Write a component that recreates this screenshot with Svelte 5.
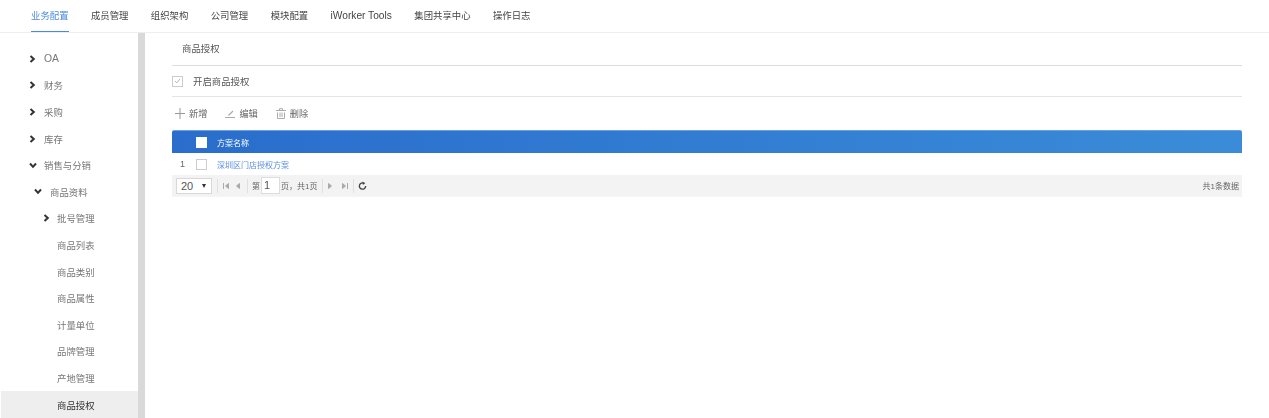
<script>
  const tabs = ['业务配置', '成员管理', '组织架构', '公司管理', '模块配置', 'iWorker Tools', '集团共享中心', '操作日志'];

  const menu = [
    { label: 'OA', depth: 0, arrow: 'right' },
    { label: '财务', depth: 0, arrow: 'right' },
    { label: '采购', depth: 0, arrow: 'right' },
    { label: '库存', depth: 0, arrow: 'right' },
    { label: '销售与分销', depth: 0, arrow: 'down' },
    { label: '商品资料', depth: 1, arrow: 'down' },
    { label: '批号管理', depth: 2, arrow: 'right' },
    { label: '商品列表', depth: 2 },
    { label: '商品类别', depth: 2 },
    { label: '商品属性', depth: 2 },
    { label: '计量单位', depth: 2 },
    { label: '品牌管理', depth: 2 },
    { label: '产地管理', depth: 2 },
    { label: '商品授权', depth: 2, active: true }
  ];
</script>

<div class="page">
  <nav class="topnav">
    {#each tabs as tab, i}
      <span class="tab" class:current={i === 0}>{tab}</span>
    {/each}
  </nav>

  <div class="body">
    <aside class="sidebar">
      <ul class="menu">
        {#each menu as item}
          <li class="item depth{item.depth}" class:active={item.active}>
            <span class="arrow">
              {#if item.arrow === 'right'}
                <svg width="7" height="8" viewBox="0 0 7 8"><path d="M1.5 1 L4.8 4 L1.5 7" fill="none" stroke="#333" stroke-width="2"/></svg>
              {:else if item.arrow === 'down'}
                <svg width="8" height="7" viewBox="0 0 8 7"><path d="M1 1.5 L4 4.8 L7 1.5" fill="none" stroke="#333" stroke-width="2"/></svg>
              {/if}
            </span>
            <span class="label">{item.label}</span>
          </li>
        {/each}
      </ul>
    </aside>
    <div class="scrollbar"></div>

    <main class="content">
      <div class="crumb">商品授权</div>

      <div class="enable">
        <span class="check small">
          <svg width="7" height="6" viewBox="0 0 7 6"><path d="M1 3 L2.8 4.8 L6 1" fill="none" stroke="#aaa" stroke-width="0.9"/></svg>
        </span>
        <span>开启商品授权</span>
      </div>

      <div class="toolbar">
        <span class="tool">
          <svg width="10" height="11" viewBox="0 0 10 11"><path d="M5 0 V11 M0 5.5 H10" stroke="#999" stroke-width="1"/></svg>
          新增
        </span>
        <span class="tool">
          <svg width="10" height="11" viewBox="0 0 10 11"><path d="M0 9.5 H10 M3.5 7.5 L8 3" fill="none" stroke="#aaa" stroke-width="1.2"/></svg>
          编辑
        </span>
        <span class="tool">
          <svg width="10" height="11" viewBox="0 0 10 11"><path d="M0 2.5 H10 M3.5 2.5 V0.7 H6.5 V2.5 M1.5 4.5 V10.5 H8.5 V4.5 M4 4.5 V9 M6 4.5 V9" fill="none" stroke="#aaa" stroke-width="1"/></svg>
          删除
        </span>
      </div>

      <div class="grid">
        <div class="grid-head">
          <span class="head-check"></span>
          <span class="head-title">方案名称</span>
        </div>
        <div class="grid-row">
          <span class="row-no">1</span>
          <span class="check row-check"></span>
          <span class="row-link">深圳区门店授权方案</span>
        </div>
        <div class="pager">
          <span class="page-size">20<i class="caret"></i></span>
          <span class="sep"></span>
          <span class="pg-group prev">
            <svg width="6" height="8" viewBox="0 0 6 8"><path d="M0.5 1 V7 M5.5 1.5 L2.5 4 L5.5 6.5 Z" fill="#aaa" stroke="#aaa" stroke-width="1"/></svg>
            <svg width="4" height="8" viewBox="0 0 4 8"><path d="M3.5 1.5 L0.5 4 L3.5 6.5 Z" fill="#aaa" stroke="#aaa" stroke-width="1"/></svg>
          </span>
          <span class="sep"></span>
          <span>第</span>
          <span class="page-input">1</span>
          <span>页，共1页</span>
          <span class="sep"></span>
          <span class="pg-group next">
            <svg width="4" height="8" viewBox="0 0 4 8"><path d="M0.5 1.5 L3.5 4 L0.5 6.5 Z" fill="#aaa" stroke="#aaa" stroke-width="1"/></svg>
            <svg width="6" height="8" viewBox="0 0 6 8"><path d="M5.5 1 V7 M0.5 1.5 L3.5 4 L0.5 6.5 Z" fill="#aaa" stroke="#aaa" stroke-width="1"/></svg>
          </span>
          <span class="sep"></span>
          <svg width="9" height="10" viewBox="0 0 10 10"><path d="M6.8 2 A3.5 3.5 0 1 0 8.5 5" fill="none" stroke="#444" stroke-width="1.5"/><path d="M5 0 L8 2 L5.5 4 Z" fill="#444"/></svg>
          <span class="total">共1条数据</span>
        </div>
      </div>
    </main>
  </div>
</div>

<style>
  :global(body) {
    margin: 0;
    background: #fff;
  }

  .page {
    width: 1269px;
    height: 418px;
    overflow: hidden;
    font-family: "Liberation Sans", "Noto Sans CJK SC", sans-serif;
    font-size: 9.4px;
    color: #666;
    filter: blur(0.3px);
  }

  .topnav {
    height: 32px;
    display: flex;
    gap: 22.4px;
    padding-left: 31px;
    border-bottom: 1px solid #eee;
  }

  .tab {
    line-height: 31px;
    height: 32px;
    box-sizing: border-box;
    color: #444;
  }

  .tab:nth-child(6) {
    font-size: 10.2px;
  }

  .tab.current {
    color: #4a8ae0;
    border-bottom: 1px solid #4a8ae0;
  }

  .body {
    display: flex;
    height: 385px;
  }

  .sidebar {
    width: 138px;
    flex: none;
    padding-top: 12.5px;
    box-sizing: border-box;
  }

  .menu {
    list-style: none;
    margin: 0;
    padding: 0;
  }

  .item {
    height: 26.6px;
    display: flex;
    align-items: center;
    color: #777;
    margin-left: 1px;
  }

  .item:first-child .label {
    font-size: 10.4px;
  }

  .item.active {
    background: #eee;
    color: #333;
  }

  .arrow {
    flex: none;
    display: flex;
    align-items: center;
  }

  .depth0 { padding-left: 28px; }
  .depth1 { padding-left: 33px; }
  .depth2 { padding-left: 42px; }

  .depth0 .arrow { width: 15px; }
  .depth1 .arrow { width: 16px; }
  .depth2 .arrow { width: 14px; }

  .scrollbar {
    width: 7px;
    flex: none;
    background: #d9d9d9;
  }

  .content {
    width: 1070px;
    margin-left: 27px;
    flex: none;
  }

  .crumb {
    height: 32px;
    line-height: 31px;
    padding-left: 10px;
    border-bottom: 1px solid #ddd;
    color: #555;
  }

  .enable {
    height: 30px;
    display: flex;
    align-items: center;
    gap: 10px;
    border-bottom: 1px solid #e5e5e5;
    color: #555;
  }

  .check {
    display: inline-flex;
    align-items: center;
    justify-content: center;
    box-sizing: border-box;
    border: 1px solid #ccc;
    background: #fff;
  }

  .check.small {
    width: 11px;
    height: 11px;
  }

  .toolbar {
    height: 32px;
    padding-bottom: 1px;
    display: flex;
    align-items: center;
    gap: 18px;
    padding-left: 3px;
  }

  .tool {
    display: flex;
    align-items: center;
    gap: 4px;
    color: #666;
    font-size: 9.2px;
  }

  .grid {
    border-bottom: 1px solid #f5f5f5;
    font-size: 8px;
  }

  .grid-head {
    height: 23px;
    display: flex;
    align-items: center;
    background: linear-gradient(90deg, #2a6dcc, #3a8cd8);
    border-top: 1px solid #6aa0e0;
    box-sizing: border-box;
    border-radius: 2px 2px 0 0;
    color: #fff;
  }

  .head-check {
    width: 11px;
    height: 11px;
    margin-left: 24px;
    background: #fff;
  }

  .head-title {
    margin-left: 10px;
  }

  .grid-row {
    height: 22px;
    display: flex;
    align-items: center;
  }

  .row-no {
    width: 24px;
    padding-left: 8px;
    box-sizing: border-box;
    font-size: 9px;
  }

  .row-check {
    width: 11px;
    height: 11px;
  }

  .row-link {
    margin-left: 10px;
    color: #5b8fe0;
  }

  .pager {
    height: 21px;
    display: flex;
    align-items: center;
    background: #f3f3f3;
    padding-left: 4px;
    color: #666;
  }

  .page-size {
    width: 36px;
    height: 16px;
    box-sizing: border-box;
    border: 1px solid #d8d8d8;
    background: #fff;
    display: flex;
    align-items: center;
    padding-left: 4px;
    font-size: 11px;
    color: #555;
    position: relative;
  }

  .caret {
    position: absolute;
    right: 5px;
    top: 5px;
    border: 2.5px solid transparent;
    border-top: 4px solid #333;
    border-bottom: 0;
  }

  .sep {
    width: 1px;
    height: 14px;
    background: #e0e0e0;
    margin: 0 4px 0 5px;
  }

  .pg-group {
    display: flex;
    align-items: center;
  }

  .pg-group.prev {
    gap: 7px;
    padding: 0 2px 0 1px;
  }

  .pg-group.next {
    gap: 10px;
    padding-left: 1px;
  }

  .page-input {
    width: 19px;
    height: 17px;
    box-sizing: border-box;
    border: 1px solid #ddd;
    background: #fff;
    line-height: 15px;
    padding-left: 2px;
    font-size: 11px;
    margin: 0 1px;
    color: #555;
  }

  .total {
    margin-left: auto;
    padding-right: 3px;
  }
</style>
